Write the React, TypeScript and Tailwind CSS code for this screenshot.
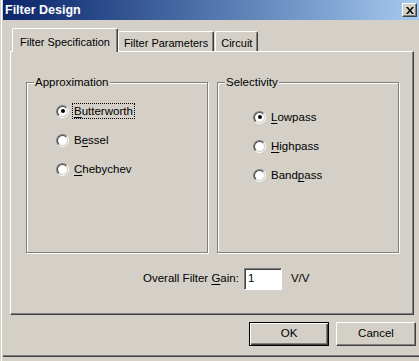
import React from 'react'

const font = { fontFamily: '"Liberation Sans", Arial, sans-serif' }

function Key({ children }: { children: React.ReactNode }) {
  return <span className="underline underline-offset-[2px]">{children}</span>
}

function Radio({ checked, focus, children }: { checked?: boolean; focus?: boolean; children: React.ReactNode }) {
  return (
    <label className="flex items-center h-[16px] gap-[4px]">
      <span className="w-[13px] h-[13px] rounded-full border border-t-[#808080] border-l-[#808080] border-b-white border-r-white flex">
        <span className="flex-1 rounded-full border border-t-[#404040] border-l-[#404040] border-b-[#d4d0c8] border-r-[#d4d0c8] bg-white flex items-center justify-center">
          {checked && <span className="w-[4px] h-[4px] rounded-full bg-black" />}
        </span>
      </span>
      <span className={`px-[1px] leading-[14px] ${focus ? 'outline outline-1 outline-dotted outline-black' : ''}`}>{children}</span>
    </label>
  )
}

function Group({ title, children, pad, top }: { title: string; children: React.ReactNode; pad: string; top: string }) {
  return (
    <fieldset className="block w-[182px] h-[178px] border border-[#808080] shadow-[inset_1px_1px_0_white,1px_1px_0_white]">
      <legend className="ml-[7px] px-[1px] bg-[#d4d0c8] leading-[14px] text-left">{title}</legend>
      <div className={`flex flex-col gap-[13px] ${pad} ${top}`}>{children}</div>
    </fieldset>
  )
}

function Tab({ active, children }: { active?: boolean; children: React.ReactNode }) {
  return (
    <div
      className={
        active
          ? 'relative z-10 h-[24px] -mb-[1px] -mr-[1px] px-[7px] pt-[5px] bg-[#d4d0c8] border-t border-l border-white border-r border-r-[#404040] rounded-t-[2px] shadow-[inset_-1px_0_0_#808080]'
          : 'h-[20px] ml-[1px] px-[5px] pt-[3px] bg-[#d4d0c8] border-t border-l border-white border-r border-r-[#404040] rounded-t-[2px] shadow-[inset_-1px_0_0_#808080]'
      }
    >
      {children}
    </div>
  )
}

function Button({ def, children }: { def?: boolean; children: React.ReactNode }) {
  return (
    <button
      className={`w-[80px] h-[24px] bg-[#d4d0c8] text-black flex items-center justify-center ${
        def
          ? 'border border-black shadow-[inset_1px_1px_0_white,inset_-1px_-1px_0_#404040,inset_-2px_-2px_0_#808080]'
          : 'border border-t-white border-l-white border-r-[#404040] border-b-[#404040] shadow-[inset_-1px_-1px_0_#808080]'
      }`}
    >
      {children}
    </button>
  )
}

export default function App() {
  return (
    <div className="w-[419px] h-[361px] bg-[#d4d0c8] text-black text-[11.5px] overflow-hidden border-l border-l-[#d4d0c8]" style={font}>
      <div className="h-full flex flex-col border-l border-l-white pl-[1px]">
        {/* Title bar */}
        <div className="h-[20px] shrink-0 flex items-center pl-[2px] pr-[2px] bg-gradient-to-r from-[#0a246a] to-[#a6caf0]">
          <span className="text-white font-bold text-[12.5px]">Filter Design</span>
          <div className="ml-auto w-[15px] h-[14px] bg-[#d4d0c8] border border-t-white border-l-white border-r-[#404040] border-b-[#404040] shadow-[inset_-1px_-1px_0_#808080] flex items-center justify-center">
            <svg width="8" height="7" viewBox="0 0 8 7">
              <path d="M0 0h2l2 2.5L6 0h2L5 3.5 8 7H6L4 4.5 2 7H0l3-3.5z" fill="black" />
            </svg>
          </div>
        </div>

        {/* Tabs */}
        <div className="ml-[9px] mt-[8px] h-[23px] flex items-end shrink-0 text-[11px]">
          <Tab active>Filter Specification</Tab>
          <Tab>Filter Parameters</Tab>
          <Tab>Circuit</Tab>
        </div>

        {/* Panel */}
        <div className="ml-[7px] w-[404px] h-[264px] shrink-0 border border-t-white border-l-white border-r-[#404040] border-b-[#404040] shadow-[inset_-1px_-1px_0_#808080] pt-[23px] pl-[15px] flex flex-col">
          <div className="flex gap-[9px]">
            <Group title="Approximation" pad="pl-[29px]" top="pt-[14px]">
              <Radio checked focus>
                <Key>B</Key>utterworth
              </Radio>
              <Radio>
                B<Key>e</Key>ssel
              </Radio>
              <Radio>
                <Key>C</Key>hebychev
              </Radio>
            </Group>
            <Group title="Selectivity" pad="pl-[35px]" top="pt-[20px]">
              <Radio checked>
                <Key>L</Key>owpass
              </Radio>
              <Radio>
                <Key>H</Key>ighpass
              </Radio>
              <Radio>
                Band<Key>p</Key>ass
              </Radio>
            </Group>
          </div>

          <div className="mt-[15px] pl-[117px] flex items-center h-[22px]">
            <span>
              Overall Filter <Key>G</Key>ain:
            </span>
            <div className="ml-[5px] w-[38px] h-[22px] bg-white border border-t-[#808080] border-l-[#808080] border-b-white border-r-white shadow-[inset_1px_1px_0_#404040] pl-[3px] flex items-center">
              1
            </div>
            <span className="ml-[9px]">V/V</span>
          </div>
        </div>

        {/* Buttons */}
        <div className="mt-[7px] h-[24px] shrink-0 flex justify-end gap-[7px] pr-[3px]">
          <Button def>OK</Button>
          <Button>Cancel</Button>
        </div>

        <div className="mt-[9px] h-[2px] shrink-0 border-t border-t-[#808080] border-b border-b-[#404040]" />
      </div>
    </div>
  )
}
